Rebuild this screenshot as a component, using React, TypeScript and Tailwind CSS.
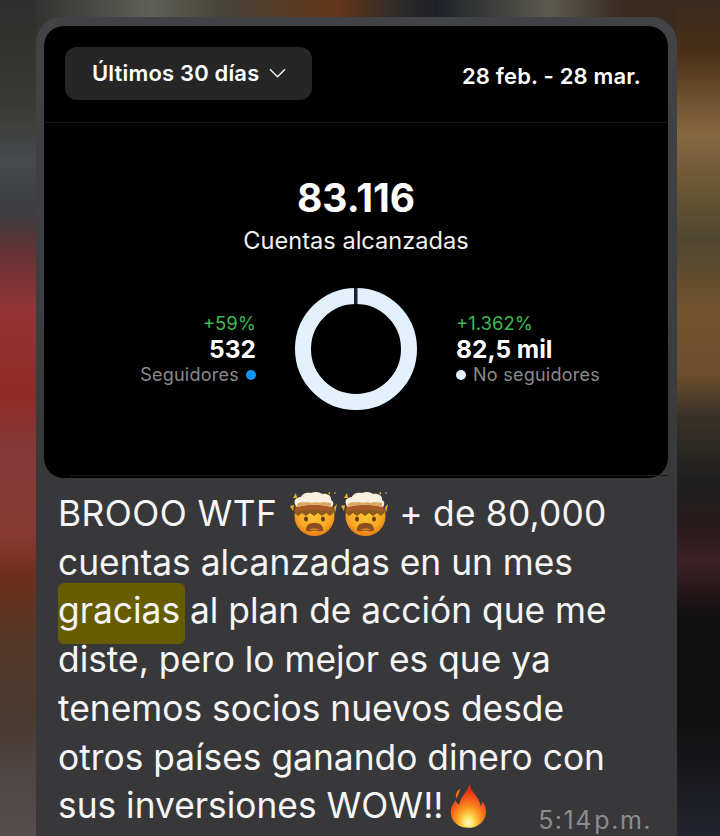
function ExplodingHead({ id, className }: { id: string; className: string }) {
  return (
    <svg viewBox="0 0 48 46" className={className}>
      <defs>
        <radialGradient id={id} cx="50%" cy="40%" r="65%">
          <stop offset="0%" stopColor="#fcc93a" />
          <stop offset="65%" stopColor="#f8aa24" />
          <stop offset="100%" stopColor="#e46f18" />
        </radialGradient>
      </defs>
      <circle cx="24.5" cy="25" r="20" fill={`url(#${id})`} />
      <path d="M5 17 L43 16 L44 21 L40 25 L36 22 L32 25 L28 22 L24 25 L20 22 L16 25 L12 22 L8 25 L4 21 Z" fill="#8a5a1e" />
      <path d="M5 15 C14 13 34 13 43 15 L42 21 C32 18 16 18 6 21 Z" fill="#a85a24" />
      <path d="M5 13 C3 8 8 6 11 6 C12 2 18 1 21 2 C25 0 30 1 32 3 C37 2 42 5 41 9 C44 10 44 15 41 16 C30 13 18 13 7 16 C6 15 5 14 5 13 Z" fill="#f9f1df" />
      <path d="M7 13 C11 10 15 12 18 11 C22 13 26 10 30 12 C33 10 37 12 41 12 L41 16 C30 13 18 13 7 16 Z" fill="#dba65e" />
      <path d="M3 7 L6 2 L7 7 Z M0 15 L4 14 L3 20 Z M44 16 L47 13 L45 22 Z M38 2 L40 1 L40 4 Z" fill="#f2b51d" />
      <circle cx="45" cy="2" r="0.7" fill="#cfd2d6" />
      <ellipse cx="16" cy="28" rx="2" ry="2.6" fill="#6a3b17" />
      <ellipse cx="33" cy="28" rx="2" ry="2.6" fill="#6a3b17" />
      <path d="M16 39 C16 33 20 32 24.5 32 C29 32 33 33 33 39 C33 41 29 40 24.5 40 C20 40 16 41 16 39 Z" fill="#8a4f1d" />
      <path d="M19 39 C21 36.5 28 36.5 30 39 C28 39.6 21 39.6 19 39 Z" fill="#c97a2c" />
    </svg>
  )
}

function Fire({ className }: { className: string }) {
  return (
    <svg viewBox="0 0 40 48" className={className}>
      <defs>
        <radialGradient id="flame" cx="50%" cy="88%" r="75%">
          <stop offset="0%" stopColor="#fffbe0" />
          <stop offset="18%" stopColor="#ffe45c" />
          <stop offset="45%" stopColor="#fd9a1f" />
          <stop offset="75%" stopColor="#f5561a" />
          <stop offset="100%" stopColor="#dd2f12" />
        </radialGradient>
      </defs>
      <path d="M21 0 C23 8 29 12 32 19 C33 21 33 23 33 24 C34 22 35 20 35 18 C39 24 40 29 38 35 C35 43 28 47 20 47 C10 47 2 41 1 32 C0 25 4 21 6 17 C7 20 8 21 10 22 C11 14 18 9 21 0 Z" fill="url(#flame)" />
      <path d="M7 9 C8 7 10 5 11 5 C10 9 9 12 7 15 C6 13 6 11 7 9 Z" fill="#f26a1c" />
    </svg>
  )
}

function Ring() {
  return (
    <svg viewBox="0 0 122 122" className="w-[122px] h-[122px]">
      <circle cx="61" cy="61" r="53" fill="none" stroke="#e3f1fd" strokeWidth="16" />
      <rect x="59" y="0" width="3.5" height="16" fill="#16222c" />
    </svg>
  )
}

const lines = ['cuentas alcanzadas en un mes']
const lines2 = ['diste, pero lo mejor es que ya', 'tenemos socios nuevos desde', 'otros países ganando dinero con']

export default function App() {
  return (
    <div className="flex w-[720px] h-[836px] overflow-hidden bg-[#2f2f2f] font-['Inter',sans-serif]">
      <div className="w-9 shrink-0 bg-[linear-gradient(180deg,#2e2e2e_0px,#3a3a35_107px,#474b4e_160px,#3d3d40_213px,#6a3335_256px,#943436_310px,#8f2b26_395px,#843b3a_453px,#8a3a33_533px,#6e2e1c_576px,#553827_640px,#4a3a30_720px,#4e4645_773px,#554f50_836px)]" />

      <div className="w-[641px] shrink-0 pt-[17px] bg-[linear-gradient(90deg,#333331_0px,#5f6058_115px,#48443a_184px,#64361a_299px,#2e2a28_364px,#1e2228_400px,#5c5a50_514px,#3a2c20_584px,#3a2a1c_641px)]">
        <div className="h-[819px] rounded-t-[26px] pl-2 pr-[9px] pt-[9px] bg-[linear-gradient(180deg,#414347_0px,#3d3e41_300px,#38383a_480px)]">
          <div className="flex h-[452px] flex-col rounded-[20px] bg-black text-white">
            <div className="flex h-[97px] items-center justify-between border-b border-[#191919] pl-[21px] pr-[27px]">
              <div className="flex h-[53px] w-[247px] items-center rounded-xl bg-[#262626] pl-[27px] -mt-[2px]">
                <span className="text-[22px] font-semibold tracking-[0.17px]">Últimos 30 días</span>
                <svg viewBox="0 0 18 10" className="ml-[10px] w-[17px] h-[10px]" fill="none" stroke="#f2f2f2" strokeWidth="1.5">
                  <path d="M1 1 L9 9 L17 1" />
                </svg>
              </div>
              <span className="text-[22px] font-semibold tracking-[0.17px] pt-[4px]">28 feb. - 28 mar.</span>
            </div>

            <div className="flex flex-col items-center pt-[51px]">
              <div className="text-[39px] leading-[48px] font-bold">83.116</div>
              <div className="mt-[4px] text-[23.6px] leading-[30px] text-[#f0f0f0]">Cuentas alcanzadas</div>
              <div className="mt-[32px] grid w-full grid-cols-[1fr_auto_1fr] items-center gap-[39px]">
                <div className="flex flex-col items-end">
                  <span className="text-[18.5px] leading-[24px] text-[#3fb950]">+59%</span>
                  <span className="text-[24.5px] leading-[28px] font-bold">532</span>
                  <span className="flex items-center gap-[7px] text-[18px] leading-[24px] tracking-[0.25px] text-[#8b8b8b]">
                    Seguidores
                    <span className="w-[10px] h-[10px] rounded-full bg-[#0f95f6]" />
                  </span>
                </div>
                <Ring />
                <div className="flex flex-col items-start">
                  <span className="text-[18.5px] leading-[24px] text-[#3fb950]">+1.362%</span>
                  <span className="text-[24.5px] leading-[28px] font-bold">82,5 mil</span>
                  <span className="flex items-center gap-[7px] text-[18px] leading-[24px] tracking-[0.25px] text-[#8b8b8b]">
                    <span className="w-[10px] h-[10px] rounded-full bg-[#e3f1fd]" />
                    No seguidores
                  </span>
                </div>
              </div>
            </div>

            <div className="mt-auto mb-[2px] ml-[26px] h-px bg-[#1a1a1a]" />
          </div>

          <div className="pl-[14px] pt-[12px] text-[35.35px] leading-[48.7px] text-[#f5f5f5] whitespace-nowrap">
            <div className="flex items-center">
              <span className="tracking-[0.45px]">BROOO WTF</span>
              <ExplodingHead id="head-a" className="ml-[13px] w-[48px] h-[46px]" />
              <ExplodingHead id="head-b" className="ml-[3px] w-[48px] h-[46px]" />
              <span className="ml-[10px] tracking-[0.2px]">+ de 80,000</span>
            </div>
            {lines.map((l) => (
              <div key={l}>{l}</div>
            ))}
            <div>
              <span className="bg-[#685c00] rounded-[6px] pt-[6px] pb-[12px] pr-[5px] -mr-[5px]">gracias</span> al plan de acción que me
            </div>
            {lines2.map((l) => (
              <div key={l}>{l}</div>
            ))}
            <div className="flex h-[48.7px] items-center">
              sus inversiones WOW!!
              <Fire className="ml-[6px] w-[37px] h-[45px]" />
              <span className="ml-auto mr-[16px] mt-[26px] text-[25px] leading-[30px] tracking-[1.5px] [word-spacing:-7px] text-[#8c8c8e]">5:14 p.m.</span>
            </div>
          </div>
        </div>
      </div>

      <div className="w-[43px] shrink-0 bg-[linear-gradient(180deg,#3a2a1c_0px,#4a3018_53px,#86683f_133px,#6a5634_187px,#4f4630_240px,#72532d_310px,#6e4f2c_373px,#3a3228_416px,#1f1f1f_480px,#2a1a1c_533px,#3f2228_560px,#121010_613px,#101010_720px,#23242e_836px)]" />
    </div>
  )
}
